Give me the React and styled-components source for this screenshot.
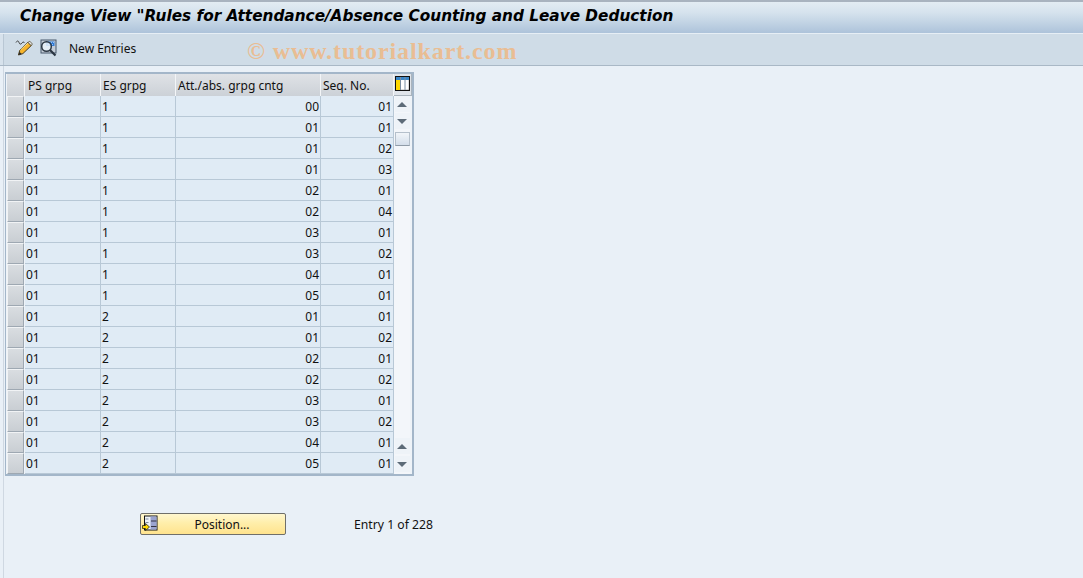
import React from 'react';
import styled, { createGlobalStyle } from 'styled-components';

const GlobalStyle = createGlobalStyle`
  html, body {
    margin: 0;
    padding: 0;
    background: #e9f0f7;
  }
  body {
    font-family: "Noto Sans", "DejaVu Sans", sans-serif;
    font-size: 11px;
    color: #000;
  }
`;

const Page = styled.div`
  position: relative;
  width: 1083px;
  height: 578px;
  overflow: hidden;
  display: flex;
  flex-direction: column;
`;

const TitleBar = styled.header`
  box-sizing: border-box;
  height: 33px;
  flex: none;
  border-top: 2px solid #a9b3bf;
  display: flex;
  align-items: center;
  padding: 0 0 3px 20px;
  background: linear-gradient(#e3ecf3, #d5e2ed 35%, #adc3da);
`;

const Title = styled.h1`
  margin: 0;
  font-family: "DejaVu Sans", sans-serif;
  font-size: 15.3px;
  font-weight: 700;
  font-style: italic;
  white-space: nowrap;
`;

const Toolbar = styled.div`
  box-sizing: border-box;
  height: 33px;
  flex: none;
  border-top: 1px solid #e6eef5;
  border-bottom: 1px solid #a9b8c6;
  background: #cfdce7;
  box-shadow: inset 3px 0 0 #d7e2ec, inset 4px 0 0 #b9c7d4;
  display: flex;
  align-items: center;
  padding: 0 0 3px 15px;
`;

const ToolIcon = styled.svg`
  width: 18px;
  height: 18px;
  margin-right: 6px;
  flex: none;
`;

const ToolText = styled.span`
  margin-left: 6px;
  font-size: 12px;
  color: #111;
`;

const Watermark = styled.div`
  position: absolute;
  left: 247px;
  top: 38px;
  font-family: "Liberation Serif", serif;
  font-size: 24px;
  font-weight: 700;
  letter-spacing: 0.9px;
  color: #e9bd93;
  white-space: nowrap;
`;

const Content = styled.main`
  flex: 1;
  margin-left: 3px;
  border-left: 1px solid #cfd8e2;
  padding: 6px 0 0 1px;
`;

const TableFrame = styled.div`
  box-sizing: border-box;
  width: 409px;
  height: 404px;
  border: 2px solid #a3b6c9;
  border-width: 2px 2px 2px 1px;
  background: #eef3f8;
  padding: 0 0 0 1px;
  display: grid;
  grid-template-columns: 1fr 18px;
  grid-template-rows: 22px 1fr;
`;

const rowColumns = '18px 76px 75px 145px 73px';

const HeaderRow = styled.div`
  display: grid;
  grid-template-columns: ${rowColumns};
  height: 22px;
`;

const HeaderCell = styled.div`
  box-sizing: border-box;
  border-right: 1px solid #f3f5f7;
  background: linear-gradient(#dfe2e6, #ccd1d7);
  display: flex;
  align-items: center;
  padding-left: ${(p) => (p.$first ? 3 : 2)}px;
  font-size: 12px;
  color: #111;
`;

const SettingsCorner = styled.div`
  background: #dfe4ea;
  border-bottom: 1px solid #aab4bd;
  border-right: 1px solid #aab4bd;
  display: flex;
  align-items: center;
  justify-content: center;
  padding-bottom: 2px;
`;

const Rows = styled.div`
  display: flex;
  flex-direction: column;
`;

const Row = styled.div`
  display: grid;
  grid-template-columns: ${rowColumns};
  height: 21px;
`;

const Selector = styled.div`
  box-sizing: border-box;
  height: 21px;
  margin-right: 1px;
  background: linear-gradient(#d9dde1, #c9ced3);
  border: 1px solid #f1f3f5;
  border-right-color: #9ea8b2;
  border-bottom-color: #9ea8b2;
`;

const Cell = styled.div`
  box-sizing: border-box;
  height: 21px;
  background: #e0ebf5;
  border-right: 1px solid #b8c8d6;
  border-bottom: 1px solid #b8c8d6;
  display: flex;
  align-items: center;
  padding: 0 1px;
  justify-content: ${(p) => (p.$right ? 'flex-end' : 'flex-start')};
  font-size: 12px;
  color: #111;
`;

const Scrollbar = styled.div`
  display: flex;
  flex-direction: column;
  align-items: center;
  background: #f3f6fa;
  margin: 0 2px 0 0;
  padding-bottom: 2px;
`;

const ScrollButton = styled.div`
  width: 15px;
  height: 16px;
  flex: none;
  margin-bottom: ${(p) => p.$gap || 0}px;
  background: #eef3f8;
  display: flex;
  align-items: center;
  justify-content: center;
  &::before {
    content: '';
    border-left: 5px solid transparent;
    border-right: 5px solid transparent;
    ${(p) => (p.$down ? 'border-top' : 'border-bottom')}: 5px solid #5d6b78;
  }
`;

const ScrollThumb = styled.div`
  box-sizing: border-box;
  width: 15px;
  height: 14px;
  flex: none;
  background: linear-gradient(#f1f5f9, #d4deea);
  border: 1px solid #b5c0cb;
  border-bottom-color: #8f9ba7;
`;

const ScrollTrack = styled.div`
  flex: 1;
`;

const Footer = styled.div`
  display: flex;
  align-items: center;
  margin-top: 37px;
  padding-left: 135px;
`;

const PushButton = styled.button`
  box-sizing: border-box;
  position: relative;
  width: 146px;
  height: 22px;
  padding: 0 0 0 18px;
  border: 1px solid #6f6f6a;
  border-radius: 2px;
  background: linear-gradient(#fff7cf, #ffeeaa 45%, #ffe38e);
  font-family: inherit;
  font-size: 12px;
  color: #111;
`;

const ButtonIcon = styled.svg`
  position: absolute;
  left: 1px;
  top: 1px;
  width: 16px;
  height: 16px;
`;

const EntryText = styled.span`
  margin-left: 68px;
  font-size: 12.2px;
  color: #111;
`;

const rows = [
  ['1', '00', '01'], ['1', '01', '01'], ['1', '01', '02'], ['1', '01', '03'],
  ['1', '02', '01'], ['1', '02', '04'], ['1', '03', '01'], ['1', '03', '02'],
  ['1', '04', '01'], ['1', '05', '01'], ['2', '01', '01'], ['2', '01', '02'],
  ['2', '02', '01'], ['2', '02', '02'], ['2', '03', '01'], ['2', '03', '02'],
  ['2', '04', '01'], ['2', '05', '01'],
];

const PencilIcon = () => (
  <ToolIcon viewBox="0 0 18 18">
    <path d="M1 3.5c1-2 2.5-2 3 0s2 2 3 .5 2-1 2.5 0" fill="none" stroke="#3c3c3c" strokeWidth="1" />
    <path d="M3.5 16l1.2-4.6 8.3-8 3.2 3.2-8.3 8z" fill="#f7b52c" stroke="#4a3a18" strokeWidth="1" />
    <path d="M5.5 11l8.2-7.5" stroke="#fde08a" strokeWidth="1" />
    <path d="M13 3.4l3.2 3.2 1.2-1.6-2.6-2.8z" fill="#e2e6ea" stroke="#4a3a18" strokeWidth="0.7" />
    <path d="M3.5 16l.9-3.2 2.3 2.2z" fill="#2c2c2c" />
  </ToolIcon>
);

const FindIcon = () => (
  <ToolIcon viewBox="0 0 18 18">
    <rect x="2" y="1" width="15" height="13" fill="#c5ced8" stroke="#46566a" />
    <rect x="7" y="2.5" width="8.5" height="4.5" fill="#2f7ad6" />
    <path d="M8 3.5h7M9 5.5h6" stroke="#9cc4ef" strokeDasharray="1 1" />
    <circle cx="7.5" cy="7.5" r="4.8" fill="#eaf3fb" fillOpacity="0.85" stroke="#2b3642" strokeWidth="1.5" />
    <path d="M11 11l5.5 5.5" stroke="#2b3642" strokeWidth="2.2" />
  </ToolIcon>
);

const ColumnsIcon = () => (
  <svg width="15" height="15" viewBox="0 0 15 15">
    <rect x="0.5" y="0.5" width="14" height="14" fill="#fff" stroke="#111" strokeWidth="1.3" />
    <rect x="1" y="1" width="13" height="3" fill="#3a86c8" />
    <rect x="1" y="4" width="4" height="10" fill="#ffd800" />
    <path d="M5.5 1v13M10 1v13" stroke="#7a8ea3" />
  </svg>
);

const PositionIcon = () => (
  <ButtonIcon viewBox="0 0 16 16">
    <rect x="2.5" y="1" width="12.5" height="14" fill="#eef2f8" stroke="#111" />
    <rect x="8.5" y="1.5" width="6" height="13" fill="#9aa3cf" />
    <path d="M9 6h5.5M9 11.5h5.5" stroke="#334" />
    <path d="M3.5 4h3M3.5 7.5h3" stroke="#7d8ca0" />
    <path d="M0.500 10.5h3V8.5l4 3.5-4 3.5v-2h-3z" fill="#ffd800" stroke="#111" strokeWidth="0.7" />
  </ButtonIcon>
);

const App = () => (
  <Page>
    <GlobalStyle />
    <TitleBar>
      <Title>Change View &quot;Rules for Attendance/Absence Counting and Leave Deduction</Title>
    </TitleBar>
    <Toolbar>
      <PencilIcon />
      <FindIcon />
      <ToolText>New Entries</ToolText>
    </Toolbar>
    <Watermark>© www.tutorialkart.com</Watermark>
    <Content>
      <TableFrame>
        <HeaderRow>
          <HeaderCell />
          <HeaderCell $first>PS grpg</HeaderCell>
          <HeaderCell>ES grpg</HeaderCell>
          <HeaderCell>Att./abs. grpg cntg</HeaderCell>
          <HeaderCell>Seq. No.</HeaderCell>
        </HeaderRow>
        <SettingsCorner>
          <ColumnsIcon />
        </SettingsCorner>
        <Rows>
          {rows.map(([es, att, seq], i) => (
            <Row key={`${es}-${att}-${seq}-${i}`}>
              <Selector />
              <Cell>01</Cell>
              <Cell>{es}</Cell>
              <Cell $right>{att}</Cell>
              <Cell $right>{seq}</Cell>
            </Row>
          ))}
        </Rows>
        <Scrollbar>
          <ScrollButton $gap={1} />
          <ScrollButton $down $gap={3} />
          <ScrollThumb />
          <ScrollTrack />
          <ScrollButton $gap={2} />
          <ScrollButton $down />
        </Scrollbar>
      </TableFrame>
      <Footer>
        <PushButton>
          <PositionIcon />
          Position...
        </PushButton>
        <EntryText>Entry 1 of 228</EntryText>
      </Footer>
    </Content>
  </Page>
);

export default App;
